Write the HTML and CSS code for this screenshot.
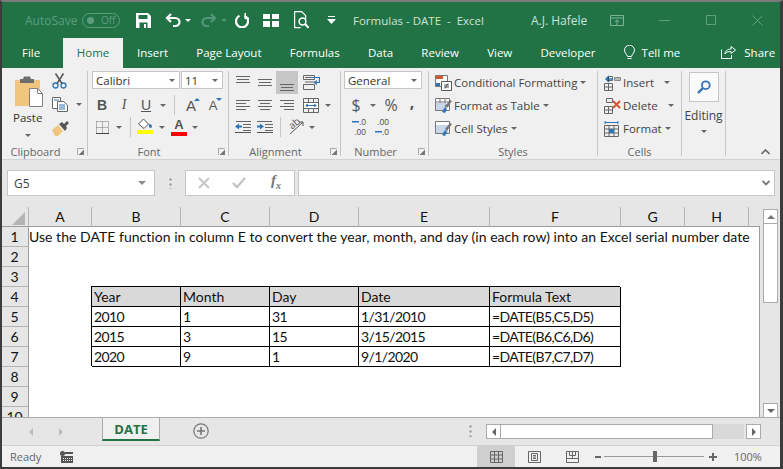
FILE: index.html
```html
<!DOCTYPE html>
<html lang="en">
  <head>
    <meta charset="UTF-8" />
    <title>Formulas - DATE - Excel</title>
    <link rel="stylesheet" href="styles.css">
  </head>
  <body>
    <div class="window">
      <!-- Title bar -->
      <div class="titlebar">
        <span class="autosave">AutoSave</span>
        <span class="toggle"><i></i>Off</span>
        <svg class="qa qa-save" width="15" height="15" viewBox="0 0 15 15"><path fill="#fff" d="M0 0h12l3 3v12H0z"/><path fill="#217346" d="M2.5 2h9v4h-9zM3.5 9.5h8V15h-8z"/><path fill="#fff" d="M8 11h2v4H8z"/></svg>
        <svg class="qa qa-undo" width="16" height="14" viewBox="0 0 16 14"><path fill="none" stroke="#fff" stroke-width="2.2" d="M6 1L2 5l4 4M2 5h8c6 0 6 8 0 8H8"/></svg>
        <i class="tri qa-tri1"></i>
        <svg class="qa qa-redo" width="16" height="14" viewBox="0 0 16 14"><path fill="none" stroke="#52977a" stroke-width="2.2" d="M10 1l4 4-4 4M14 5H6c-6 0-6 8 0 8h2"/></svg>
        <i class="tri dim qa-tri2"></i>
        <svg class="qa qa-repeat" width="14" height="15" viewBox="0 0 14 15"><path fill="none" stroke="#fff" stroke-width="2.2" d="M4.5 2.8a6 6 0 1 0 5 0"/><path fill="#fff" d="M9.5 0v6H14V4.5h-3V0z"/></svg>
        <svg class="qa qa-grid" width="16" height="13" viewBox="0 0 16 13"><path fill="#fff" d="M0 0h7v5H0zM9 0h7v5H9zM0 7h7v6H0zM9 7h7v6H9z"/></svg>
        <svg class="qa qa-preview" width="15" height="18" viewBox="0 0 15 18"><path fill="none" stroke="#fff" stroke-width="1.2" d="M.6.6h7l4 4V8M.6.6v16h6"/><circle cx="8.5" cy="10.5" r="3.4" fill="none" stroke="#fff" stroke-width="1.5"/><path stroke="#fff" stroke-width="2" d="M11 13l3.5 3.8"/></svg>
        <svg class="qa qa-custom" width="9" height="8" viewBox="0 0 9 8"><path fill="#fff" d="M1 0h7v1H1zM0 3h9L4.5 8z"/></svg>
        <span class="doc-title">Formulas - DATE &nbsp;-&nbsp; Excel</span>
        <span class="user">A.J. Hafele</span>
        <svg class="win win-ribbon" width="14" height="11" viewBox="0 0 14 11"><path fill="none" stroke="#7fb398" d="M.5.5h13v10H.5zM.5 3h13M7 10V5M5 7l2-2 2 2"/></svg>
        <svg class="win win-min" width="11" height="1" viewBox="0 0 11 1"><path fill="#5f9f80" d="M0 0h11v1H0z"/></svg>
        <svg class="win win-max" width="10" height="10" viewBox="0 0 10 10"><path fill="none" stroke="#5f9f80" d="M.5.5h9v9h-9z"/></svg>
        <svg class="win win-close" width="11" height="11" viewBox="0 0 11 11"><path stroke="#5f9f80" d="M.5.5l10 10M10.5.5l-10 10"/></svg>
      </div>

      <!-- Ribbon tabs -->
      <div class="tabs">
        <span class="tab tab-file">File</span>
        <span class="tab active">Home</span>
        <span class="tab">Insert</span>
        <span class="tab">Page Layout</span>
        <span class="tab">Formulas</span>
        <span class="tab">Data</span>
        <span class="tab">Review</span>
        <span class="tab">View</span>
        <span class="tab">Developer</span>
        <svg class="bulb" width="11" height="16" viewBox="0 0 11 16"><path fill="none" stroke="#fff" d="M3.5 11.5C3 9 .5 8 .5 5.2a5 5 0 0 1 10 0c0 2.8-2.5 3.8-3 6.300zM3.5 13.5h4"/></svg>
        <span class="tell">Tell me</span>
        <svg class="share-icon" width="15" height="14" viewBox="0 0 15 14"><path fill="none" stroke="#fff" d="M.5 4.5v9h10V10M4 9c0-3 3-5 6-5V1.5L14.5 5 10 8.5V6.5C7.5 6.5 5.5 7 4 9z"/></svg>
        <span class="share">Share</span>
      </div>

      <!-- Ribbon -->
      <div class="ribbon">
        <div class="group g-clipboard">
          <div class="group-body clip-body">
            <div class="paste">
              <svg width="30" height="32" viewBox="0 0 30 32"><path fill="#f0c67e" d="M1 4h25v26H1z"/><path fill="#6d6d6d" d="M6 3h3l1-2.5h6l1 2.5h3v4H6z"/><path fill="#fff" stroke="#808080" d="M15.5 12.5h8l5 5v13h-13z"/><path fill="none" stroke="#808080" d="M23.5 12.5v5h5"/></svg>
              <span class="paste-label">Paste</span>
              <i class="tri"></i>
            </div>
            <div class="clip-tools">
              <svg class="clip-cut" width="15" height="16" viewBox="0 0 15 16"><circle cx="3.5" cy="12.5" r="2.5" fill="none" stroke="#2f75b5" stroke-width="1.3"/><circle cx="11.5" cy="12.5" r="2.5" fill="none" stroke="#2f75b5" stroke-width="1.3"/><path stroke="#555" stroke-width="1.5" d="M5 10.5L11.5.5M10 10.5L3.5.5"/></svg>
              <div class="clip-copy">
                <svg width="16" height="15" viewBox="0 0 16 15"><path fill="#fff" stroke="#666" d="M.5.5h8v11h-8z"/><path fill="#fff" stroke="#666" d="M5.5 4.5h6l4 3.5v6.5h-10z"/><path stroke="#2f75b5" d="M2 3h5M7 8h6M7 10h6M7 12h6"/></svg>
                <i class="tri"></i>
              </div>
              <svg class="clip-brush" width="17" height="15" viewBox="0 0 17 15"><path fill="#f0c67e" d="M0 9l6-5 5 6-5 5H3z"/><path fill="#555" d="M7 3l3-2 2 2 3-3 2 2-3 3 1 2-2 3z"/></svg>
            </div>
          </div>
          <div class="group-label has-launch">Clipboard<i class="launch"></i></div>
        </div>

        <div class="group g-font">
          <div class="group-body">
            <div class="row-top">
              <span class="combo combo-font">Calibri<i class="tri"></i></span>
              <span class="combo combo-size">11<i class="tri"></i></span>
            </div>
            <div class="tools">
              <span class="tb"><b class="glyph-b">B</b></span>
              <span class="tb"><em class="glyph-i">I</em></span>
              <span class="tb"><u class="glyph-u">U</u></span>
              <span class="cb"><i class="tri"></i></span>
              <span class="sep sep-font1"></span>
              <span class="tb"><span class="glyph-grow">A</span><i class="mini-up"></i></span>
              <span class="tb"><span class="glyph-shrink">A</span><i class="mini-down"></i></span>
            </div>
            <div class="tools">
              <span class="tb"><svg width="13" height="13" viewBox="0 0 13 13"><path fill="none" stroke="#777" stroke-dasharray="1 1" d="M.5.5h12v12M.5.5v12M6.5.5v12M.5 6.5h12"/><path stroke="#444" d="M0 12.5h13"/></svg></span>
              <span class="cb"><i class="tri"></i></span>
              <span class="sep sep-font2"></span>
              <span class="tb tb-color">
                <svg width="16" height="12" viewBox="0 0 16 12"><path fill="#fff" stroke="#555" d="M1.5 6l5-5 5 5-4.5 4.5z"/><path fill="#2f75b5" d="M12 6c2 0 3 1 3 3 0 1-3 1-3 0z"/></svg>
                <i class="swatch yellow"></i>
              </span>
              <span class="cb"><i class="tri"></i></span>
              <span class="tb tb-color">
                <span class="glyph-color">A</span>
                <i class="swatch red"></i>
              </span>
              <span class="cb cb-narrow"><i class="tri"></i></span>
            </div>
          </div>
          <div class="group-label has-launch">Font<i class="launch"></i></div>
        </div>

        <div class="group g-align">
          <div class="group-body">
            <div class="tools tools-first">
              <span class="tb"><svg class="al-top" width="14" height="7" viewBox="0 0 14 7"><path stroke="#666" d="M0 .5h14M1 3.5h12M0 6.5h14"/></svg></span>
              <span class="tb"><svg width="14" height="7" viewBox="0 0 14 7"><path stroke="#666" d="M0 .5h14M1 3.5h12M0 6.5h14"/></svg></span>
              <span class="tb tb-on"><svg class="al-bottom" width="14" height="7" viewBox="0 0 14 7"><path stroke="#666" d="M0 .5h14M1 3.5h12M0 6.5h14"/></svg></span>
              <span class="tb tb-wrap"><svg width="17" height="15" viewBox="0 0 17 15"><path fill="none" stroke="#666" d="M.5.5h11v4H.5zM.5 9.5h11v5H.5zM2 2.5h8M2 7h10"/><path fill="none" stroke="#2f75b5" stroke-width="1.2" d="M8 2.5h8.5v5H12M14 5.5l-2.5 2 2.5 2"/></svg></span>
            </div>
            <div class="tools">
              <span class="tb"><svg width="14" height="10" viewBox="0 0 14 10"><path stroke="#666" d="M0 .5h14M0 3.5h10M0 6.5h14M0 9.5h10"/></svg></span>
              <span class="tb"><svg width="14" height="10" viewBox="0 0 14 10"><path stroke="#666" d="M0 .5h14M2 3.5h10M0 6.5h14M2 9.5h10"/></svg></span>
              <span class="tb"><svg width="14" height="10" viewBox="0 0 14 10"><path stroke="#666" d="M0 .5h14M4 3.5h10M0 6.5h14M4 9.5h10"/></svg></span>
              <span class="tb tb-wrap"><svg width="16" height="15" viewBox="0 0 16 15"><path fill="none" stroke="#666" d="M.5.5h15v14H.5zM.5 4.5h15M.5 10.5h15M5.5.5v4M10.5.5v4M5.5 10.5v4M10.5 10.5v4"/><path fill="#fff" d="M1 5h14v5H1z"/><path stroke="#2f75b5" d="M3 7.5h10M4.5 6L3 7.5 4.5 9M11.5 6L13 7.5 11.5 9"/></svg></span>
              <span class="cb"><i class="tri"></i></span>
            </div>
            <div class="tools">
              <span class="tb"><svg width="16" height="12" viewBox="0 0 16 12"><path stroke="#666" d="M1 .5h15M8 3.5h8M8 6.5h8M8 9.5h8"/><path stroke="#555" d="M0 11.5h16"/><path fill="#2f75b5" d="M0 5.5L4 2.5v2h3v2H4v2z"/></svg></span>
              <span class="tb"><svg width="16" height="12" viewBox="0 0 16 12"><path stroke="#666" d="M0 .5h15M8 3.5h8M8 6.5h8M8 9.5h8"/><path stroke="#555" d="M0 11.5h16"/><path fill="#2f75b5" d="M7 5.5L3 2.5v2H0v2h3v2z"/></svg></span>
              <span class="sep sep-align"></span>
              <span class="tb tb-orient"><span class="orient">ab</span><svg width="18" height="16" viewBox="0 0 18 16"><path stroke="#555" fill="none" d="M3 15L16 3M16 3h-4M16 3v4"/></svg></span>
              <span class="cb cb-orient"><i class="tri"></i></span>
            </div>
          </div>
          <div class="group-label has-launch">Alignment<i class="launch"></i></div>
        </div>

        <div class="group g-number">
          <div class="group-body">
            <div class="row-top">
              <span class="combo combo-num">General<i class="tri"></i></span>
            </div>
            <div class="tools num-tools">
              <span class="tb glyph-sym">$</span>
              <span class="cb"><i class="tri"></i></span>
              <span class="tb glyph-sym glyph-pct">%</span>
              <span class="tb glyph-sym glyph-comma">,</span>
            </div>
            <div class="tools num-tools">
              <span class="tb dec"><span><i class="arrow-l"></i>.0</span><span>.00</span></span>
              <span class="tb dec"><span>.00</span><span><i class="arrow-r"></i>.0</span></span>
            </div>
          </div>
          <div class="group-label has-launch">Number<i class="launch"></i></div>
        </div>

        <div class="group g-styles">
          <div class="group-body">
            <div class="cmd">
              <svg width="17" height="16" viewBox="0 0 17 16"><path fill="#fff" stroke="#777" d="M.5.5h12v11H.5z"/><path fill="#d9552b" d="M1 1h7v3H1z"/><path fill="#2f75b5" d="M1 8h4v3H1z"/><path fill="#fff" stroke="#555" d="M6.5 6.5h10v9h-10z"/><path stroke="#555" d="M9 10h5M9 12h5M13 8.5l-3 5"/></svg>
              <span>Conditional Formatting</span><i class="tri"></i>
            </div>
            <div class="cmd">
              <svg width="17" height="16" viewBox="0 0 17 16"><path fill="#fff" stroke="#777" d="M.5.5h14v12H.5zM.5 4h14M.5 8h14M5 .5v12M10 .5v12"/><path fill="#c7d6e8" d="M1 5h9v7H1z"/><path fill="#2f75b5" d="M7 14l3-5 2 2-2 4z"/><path fill="#777" d="M10 8l5-6 2 1-5 7z"/></svg>
              <span>Format as Table</span><i class="tri"></i>
            </div>
            <div class="cmd">
              <svg width="17" height="16" viewBox="0 0 17 16"><path fill="#fff" stroke="#777" d="M.5.5h14v12H.5z"/><path fill="#c7d6e8" d="M1 4h12v8H1z"/><path fill="#2f75b5" d="M7 14l3-5 2 2-2 4z"/><path fill="#777" d="M10 8l5-6 2 1-5 7z"/></svg>
              <span>Cell Styles</span><i class="tri"></i>
            </div>
          </div>
          <div class="group-label">Styles</div>
        </div>

        <div class="group g-cells">
          <div class="group-body">
            <div class="cmd">
              <svg width="17" height="16" viewBox="0 0 17 16"><path fill="none" stroke="#666" d="M.5 8.5h8v7h-8zM4.5 8.5v7M.5 12h8M4.5 1.5h4v4h-4"/><path fill="#bbb" stroke="#888" d="M10.5 2.5h6v3h-6z"/><path stroke="#2f75b5" stroke-width="1.5" d="M9 4H2M5 1L2 4l3 3"/></svg>
              <span>Insert</span><i class="tri tri-far"></i>
            </div>
            <div class="cmd">
              <svg width="17" height="16" viewBox="0 0 17 16"><path fill="none" stroke="#666" d="M.5 8.5h8v7h-8zM4.5 8.5v7M.5 12h8M2.5.5h6v4h-6z"/><path stroke="#d9552b" stroke-width="2" d="M9 3l7 7M16 3l-7 7"/></svg>
              <span>Delete</span><i class="tri tri-far"></i>
            </div>
            <div class="cmd">
              <svg width="17" height="16" viewBox="0 0 17 16"><path fill="none" stroke="#666" d="M.5 4.5h14v11H.5zM.5 8h14M.5 12h14M5 4.5v11M10 4.5v11"/><path fill="#2f75b5" d="M5 8h5v4H5z"/><path stroke="#2f75b5" d="M1 1.5h13M1 0v3M14 0v3"/></svg>
              <span>Format</span><i class="tri"></i>
            </div>
          </div>
          <div class="group-label">Cells</div>
        </div>

        <div class="group g-editing">
          <div class="edit-btn">
            <svg width="14" height="14" viewBox="0 0 14 14"><circle cx="8.8" cy="5.2" r="3.9" fill="none" stroke="#2f75b5" stroke-width="1.8"/><path stroke="#2f75b5" stroke-width="2.4" d="M6 8L1 13"/></svg>
          </div>
          <span class="edit-label">Editing</span>
          <i class="tri"></i>
        </div>

        <div class="collapse">
          <svg width="9" height="6" viewBox="0 0 9 6"><path fill="none" stroke="#666" stroke-width="1.6" d="M.5 5l4-4 4 4"/></svg>
        </div>
      </div>

      <!-- Formula bar -->
      <div class="formula-bar">
        <div class="name-box">G5<i class="tri tri-big"></i></div>
        <div class="fb-dots"></div>
        <div class="fx-box">
          <svg width="12" height="12" viewBox="0 0 12 12"><path stroke="#c4c4c4" stroke-width="1.8" d="M1 1l10 10M11 1L1 11"/></svg>
          <svg width="14" height="12" viewBox="0 0 14 12"><path fill="none" stroke="#c4c4c4" stroke-width="2.4" d="M1 6l4 4 8-9"/></svg>
          <em class="fx">f<sub>x</sub></em>
        </div>
        <div class="formula-input">
          <svg width="8" height="6" viewBox="0 0 8 6"><path fill="none" stroke="#777" stroke-width="1.8" d="M.5 1l3.5 3.5L7.5 1"/></svg>
        </div>
      </div>

      <!-- Sheet -->
      <div class="sheet-area">
        <div class="sheet">
          <div class="head-row">
            <div class="corner"><i></i></div>
            <div class="col-head">A</div>
            <div class="col-head">B</div>
            <div class="col-head">C</div>
            <div class="col-head">D</div>
            <div class="col-head">E</div>
            <div class="col-head">F</div>
            <div class="col-head">G</div>
            <div class="col-head">H</div>
          </div>
          <div class="rows">
            <div class="sheet-row">
              <div class="row-head">1</div>
              <div class="cell cell-long">Use the DATE function in column E to convert the year, month, and day (in each row) into an Excel serial number date</div>
            </div>
            <div class="sheet-row"><div class="row-head">2</div></div>
            <div class="sheet-row"><div class="row-head">3</div></div>
            <div class="sheet-row">
              <div class="row-head">4</div><div></div>
              <div class="cell boxed shaded">Year</div>
              <div class="cell boxed shaded">Month</div>
              <div class="cell boxed shaded">Day</div>
              <div class="cell boxed shaded">Date</div>
              <div class="cell boxed shaded">Formula Text</div>
            </div>
            <div class="sheet-row">
              <div class="row-head">5</div><div></div>
              <div class="cell boxed num">2010</div>
              <div class="cell boxed num">1</div>
              <div class="cell boxed num">31</div>
              <div class="cell boxed num">1/31/2010</div>
              <div class="cell boxed num">=DATE(B5,C5,D5)</div>
            </div>
            <div class="sheet-row">
              <div class="row-head">6</div><div></div>
              <div class="cell boxed num">2015</div>
              <div class="cell boxed num">3</div>
              <div class="cell boxed num">15</div>
              <div class="cell boxed num">3/15/2015</div>
              <div class="cell boxed num">=DATE(B6,C6,D6)</div>
            </div>
            <div class="sheet-row">
              <div class="row-head">7</div><div></div>
              <div class="cell boxed num">2020</div>
              <div class="cell boxed num">9</div>
              <div class="cell boxed num">1</div>
              <div class="cell boxed num">9/1/2020</div>
              <div class="cell boxed num">=DATE(B7,C7,D7)</div>
            </div>
            <div class="sheet-row"><div class="row-head">8</div></div>
            <div class="sheet-row"><div class="row-head">9</div></div>
            <div class="sheet-row"><div class="row-head">10</div></div>
          </div>
        </div>
        <div class="vscroll">
          <div class="sb-btn"><i class="tri tri-up"></i></div>
          <div class="vthumb"></div>
          <div class="sb-btn sb-down"><i class="tri"></i></div>
        </div>
      </div>

      <!-- Sheet tabs -->
      <div class="sheet-tabs">
        <i class="nav-prev"></i>
        <i class="nav-next"></i>
        <div class="sheet-tab">DATE</div>
        <svg class="add-sheet" width="16" height="16" viewBox="0 0 16 16"><circle cx="8" cy="8" r="7.2" fill="none" stroke="#777" stroke-width="1.2"/><path stroke="#777" stroke-width="1.6" d="M8 4v8M4 8h8"/></svg>
        <div class="tab-dots"></div>
        <div class="hscroll">
          <div class="sb-btn sb-h"><i class="nav-dark-l"></i></div>
          <div class="hthumb"></div>
          <div class="htrack"></div>
          <div class="sb-btn sb-h"><i class="nav-dark-r"></i></div>
        </div>
      </div>

      <!-- Status bar -->
      <div class="status">
        <span class="ready">Ready</span>
        <svg class="macro" width="13" height="12" viewBox="0 0 13 12"><circle cx="2.5" cy="2.5" r="2.5" fill="#555"/><path fill="#555" d="M5 1h8v2H5zM1 5h12v7H1z"/><path stroke="#f0f0f0" stroke-dasharray="1 1" d="M3 7.5h9M3 9.5h9"/></svg>
        <div class="view view-on"><svg width="13" height="12" viewBox="0 0 13 12"><path fill="none" stroke="#666" d="M.5.5h12v11H.5zM.5 4h12M.5 8h12M4.5.5v11M8.5.5v11"/></svg></div>
        <div class="view"><svg width="13" height="12" viewBox="0 0 13 12"><path fill="none" stroke="#666" d="M.5.5h12v11H.5zM3.5 2.5h6v7h-6zM5 4.5h3M5 6h3M5 7.5h3"/></svg></div>
        <div class="view"><svg width="13" height="12" viewBox="0 0 13 12"><path fill="none" stroke="#666" d="M.5.5h12v11H.5zM.5 7.5h12M6.5.5v7M3.5.5v4h6v-4"/></svg></div>
        <div class="zoom">
          <i class="z-minus"></i>
          <div class="z-track"><i></i></div>
          <i class="z-plus"></i>
        </div>
        <span class="zoom-pct">100%</span>
      </div>
    </div>
  </body>
</html>
```

FILE: styles.css
```css
* {
  box-sizing: border-box;
}

html,
body {
  margin: 0;
  height: 100%;
  overflow: hidden;
}

body {
  font-family: "Open Sans", "Noto Sans", sans-serif;
  font-size: 11.5px;
  color: #444;
}

i {
  font-style: normal;
}

.window {
  width: 783px;
  height: 469px;
  display: flex;
  flex-direction: column;
  background: #e6e6e6;
  border-style: solid;
  border-color: #7a7a7a #3c3c3c #3c3c3c #3c3c3c;
  border-width: 2px 3px 2px 2px;
}

/* generic little down arrow */
.tri {
  display: inline-block;
  width: 0;
  height: 0;
  border-style: solid;
  border-width: 3px 3px 0 3px;
  border-color: #666 transparent transparent transparent;
}

/* Title bar */
.titlebar {
  height: 36px;
  flex: none;
  background: #217346;
  display: flex;
  align-items: center;
  color: #d5e6dc;
}

.autosave {
  margin-left: 23px;
  width: 51px;
  color: #5c9d7e;
  font-size: 12px;
}

.toggle {
  margin-left: 6px;
  width: 38px;
  height: 15px;
  border: 1px solid #5c9d7e;
  border-radius: 8px;
  color: #5c9d7e;
  font-size: 10px;
  line-height: 13px;
  display: flex;
  align-items: center;
  padding-left: 4px;
  gap: 7px;
}

.toggle i {
  width: 7px;
  height: 7px;
  border-radius: 50%;
  background: #5c9d7e;
}

.qa {
  flex: none;
}

.qa-save { margin-left: 16px; }
.qa-undo { margin-left: 14px; }
.qa-tri1 { margin-left: 4px; border-top-color: #fff; }
.qa-redo { margin-left: 10px; }
.qa-tri2 { margin-left: 4px; }
.tri.dim { border-top-color: #52977a; }
.qa-repeat { margin-left: 8px; }
.qa-grid { margin-left: 14px; }
.qa-preview { margin-left: 15px; }
.qa-custom { margin-left: 18px; }

.doc-title {
  margin-left: 17px;
  width: 178px;
  white-space: nowrap;
  color: #cfe2d7;
}

.user {
  width: 79px;
  font-size: 12px;
  color: #cfe2d7;
}

.win {
  flex: none;
}

.win-min { margin-left: 35px; }
.win-max { margin-left: 36px; }
.win-close { margin-left: 36px; }

/* Ribbon tabs */
.tabs {
  height: 30px;
  flex: none;
  background: #217346;
  display: flex;
  align-items: stretch;
  color: #fff;
}

.tabs > * {
  flex: none;
}

.tab {
  padding: 0 14.1px;
  line-height: 29px;
  white-space: nowrap;
}

.tab-file {
  width: 61px;
  padding: 0 0 0 20px;
}

.tab.active {
  width: 60px;
  padding: 0;
  text-align: center;
  background: #f0f0f0;
  color: #217346;
}

.bulb {
  margin: 7px 0 0 14px;
}

.tell {
  margin-left: 7px;
  line-height: 29px;
  white-space: nowrap;
}

.share-icon {
  margin: 7px 0 0 41px;
}

.share {
  margin-left: 8px;
  line-height: 29px;
}

/* Ribbon */
.ribbon {
  height: 92px;
  flex: none;
  background: #f0f0f0;
  border-bottom: 1px solid #d2d2d2;
  display: flex;
  padding-top: 3px;
}

.group {
  height: 85px;
  display: flex;
  flex-direction: column;
  border-right: 1px solid #c6c6c6;
  flex: none;
}

.group-body {
  flex: 1;
}

.group-label {
  height: 15px;
  line-height: 15px;
  text-align: center;
  color: #666;
  font-size: 11px;
  position: relative;
  top: 3px;
  white-space: nowrap;
}

.group-label.has-launch {
  padding-right: 18px;
}

.launch {
  position: absolute;
  right: 3px;
  top: 4px;
  width: 7px;
  height: 7px;
  border-left: 1px solid #aaa;
  border-top: 1px solid #aaa;
  background: linear-gradient(135deg, transparent 55%, #777 55%);
}

.g-clipboard { width: 86px; }
.g-font { width: 141px; padding-left: 3px; }
.g-align { width: 112px; padding-left: 3px; }
.g-number { width: 88px; }
.g-styles { width: 169px; padding-left: 6px; }
.g-cells { width: 84px; padding-left: 6px; }

.g-font .group-label,
.g-align .group-label {
  margin-left: -3px;
}

.g-styles .group-label,
.g-cells .group-label {
  margin-left: -6px;
}

.clip-body {
  display: flex;
}

.paste {
  width: 50px;
  padding-left: 12px;
  display: flex;
  flex-direction: column;
  align-items: flex-start;
}

.paste svg {
  margin-top: 5px;
}

.paste-label {
  margin: 1px 0 0 -1px;
  color: #333;
  line-height: 17px;
}

.paste .tri {
  margin: 8px 0 0 11px;
}

.clip-tools {
  display: flex;
  flex-direction: column;
  padding-top: 2px;
  align-items: flex-start;
}

.clip-copy {
  display: flex;
  align-items: center;
  gap: 8px;
  margin-top: 8px;
}

.clip-brush {
  margin-top: 9px;
}

.row-top {
  display: flex;
  gap: 1px;
  height: 23px;
  align-items: flex-start;
}

.combo {
  height: 18px;
  background: #fff;
  border: 1px solid #c6c6c6;
  display: flex;
  align-items: center;
  justify-content: space-between;
  padding: 0 4px 0 3px;
  color: #333;
}

.combo-font { width: 88px; margin-left: 1px; }
.combo-size { width: 42px; }
.combo-num { width: 78px; margin-left: 3px; padding-left: 3px; }

.tools {
  display: flex;
  height: 22px;
  align-items: center;
}

.tools-first {
  height: 23px;
}

.tb {
  width: 22px;
  height: 22px;
  flex: none;
  display: flex;
  align-items: center;
  justify-content: center;
  position: relative;
}

.tb-on {
  height: 23px;
  background: #c6c6c6;
}

.al-top {
  margin-top: -7px;
}

.al-bottom {
  margin-top: 9px;
}

.tb-wrap {
  margin-left: 2px;
}

.cb {
  width: 12px;
  height: 22px;
  flex: none;
  display: flex;
  align-items: center;
  justify-content: center;
}

.cb-narrow,
.cb-orient {
  width: 10px;
}

.sep {
  width: 1px;
  height: 20px;
  background: #c6c6c6;
  flex: none;
}

.sep-font1 { margin: 0 5px 0 5px; }
.sep-font2 { margin: 0 3px 0 5px; }
.sep-align { margin: 0 4px 0 4px; }

.glyph-b,
.glyph-i,
.glyph-u {
  font-size: 14px;
  color: #555;
  font-family: "Liberation Sans", sans-serif;
}

.glyph-i {
  font-family: "Liberation Serif", serif;
}

.glyph-grow,
.glyph-shrink,
.glyph-color {
  font-family: "Liberation Sans", sans-serif;
  color: #555;
  font-size: 15px;
}

.glyph-shrink {
  font-size: 13px;
}

.glyph-color {
  line-height: 14px;
  font-weight: bold;
  font-size: 13px;
}

.mini-up,
.mini-down {
  position: absolute;
  top: 4px;
  right: 2px;
  width: 0;
  height: 0;
  border-style: solid;
  border-color: #2f75b5 transparent;
}

.mini-up { border-width: 0 3px 3px 3px; }
.mini-down { border-width: 3px 3px 0 3px; }

.tb-color {
  flex-direction: column;
  justify-content: flex-start;
  padding-top: 2px;
}

.swatch {
  width: 16px;
  height: 4px;
}

.yellow { background: #ffff00; }
.red { background: #ff0000; }

.tb-orient svg {
  flex: none;
}

.orient {
  position: absolute;
  left: 3px;
  top: 1px;
  font-size: 10px;
  line-height: 12px;
  color: #555;
  transform: rotate(-40deg);
}

.num-tools {
  padding-left: 4px;
}

.glyph-sym {
  font-size: 16px;
  color: #555;
}

.glyph-pct {
  margin-left: 1px;
}

.glyph-comma {
  font-weight: bold;
  margin-top: -7px;
  margin-left: -1px;
}

.dec {
  flex-direction: column;
  font-family: "Liberation Sans", sans-serif;
  font-size: 8.5px;
  line-height: 10px;
  color: #555;
  align-items: flex-end;
  width: 21px;
  margin-right: 2px;
  white-space: nowrap;
}

.dec span {
  display: block;
  height: 10px;
}

.arrow-l,
.arrow-r {
  display: inline-block;
  width: 7px;
  height: 5px;
  vertical-align: 1px;
  background: linear-gradient(#2f75b5, #2f75b5) center / 100% 1.5px no-repeat;
}

.cmd {
  height: 23px;
  display: flex;
  align-items: center;
  color: #444;
  white-space: nowrap;
}

.cmd svg {
  flex: none;
  margin-right: 2px;
}

.cmd .tri {
  margin-left: 3px;
}

.cmd .tri-far {
  margin-left: 10px;
}

.g-editing {
  width: 44px;
  align-items: center;
  padding-top: 1px;
}

.edit-btn {
  width: 30px;
  height: 30px;
  background: #fafafa;
  border: 1px solid #c6c6c6;
  display: flex;
  align-items: center;
  justify-content: center;
}

.edit-label {
  margin-top: 5px;
  font-size: 12px;
  line-height: 17px;
}

.g-editing .tri {
  margin-top: 6px;
}

.collapse {
  margin-left: 35px;
  padding-top: 72px;
}

/* Formula bar */
.formula-bar {
  height: 47px;
  flex: none;
  display: flex;
  align-items: flex-start;
  padding: 10px 5px 0 5px;
}

.name-box {
  width: 148px;
  height: 26px;
  background: #fff;
  border: 1px solid #c6c6c6;
  display: flex;
  align-items: center;
  justify-content: space-between;
  padding: 0 8px 0 6px;
  color: #444;
  font-size: 12px;
}

.tri-big {
  border-width: 4px 4px 0 4px;
  border-top-color: #8a8a8a;
}

.fb-dots {
  width: 30px;
  height: 12px;
  margin-top: 7px;
  background: radial-gradient(circle, #aaa 1px, transparent 1.5px) center top / 3px 5px repeat-y;
}

.fx-box {
  width: 110px;
  height: 26px;
  background: #fff;
  border: 1px solid #c6c6c6;
  display: flex;
  align-items: center;
  gap: 22px;
  padding-left: 12px;
}

.fx {
  font-family: "Liberation Serif", serif;
  font-size: 15px;
  font-weight: bold;
  color: #777;
  line-height: 12px;
  margin-left: 3px;
}

.fx sub {
  font-size: 10px;
}

.formula-input {
  width: 477px;
  height: 26px;
  margin-left: 3px;
  background: #fff;
  border: 1px solid #c6c6c6;
  display: flex;
  align-items: center;
  justify-content: flex-end;
  padding-right: 4px;
}

/* Sheet */
.sheet-area {
  height: 210px;
  flex: none;
  display: flex;
  font-family: "Lato", "Open Sans", sans-serif;
  font-size: 14px;
  color: #111;
}

.sheet {
  width: 758px;
  flex: none;
  display: flex;
  flex-direction: column;
}

.head-row,
.sheet-row {
  display: grid;
  grid-template-columns: 27px 63px 89px 89px 89px 131px 131px 64px 64px;
}

.head-row {
  height: 20px;
  border-bottom: 1px solid #9c9c9c;
}

.corner {
  border-right: 1px solid #b4b4b4;
  position: relative;
}

.corner i {
  position: absolute;
  right: 3px;
  bottom: 2px;
  width: 0;
  height: 0;
  border-style: solid;
  border-width: 0 0 13px 13px;
  border-color: transparent transparent #b4b4b4 transparent;
}

.col-head {
  border-right: 1px solid #b4b4b4;
  text-align: center;
  line-height: 20px;
}

.rows {
  flex: 1;
  overflow: hidden;
  background: #fff;
  border-right: 1px solid #9c9c9c;
}

.sheet-row {
  height: 20px;
  grid-template-rows: 20px;
}

.row-head {
  background: #e6e6e6;
  border-right: 1px solid #9c9c9c;
  border-bottom: 1px solid #b4b4b4;
  text-align: center;
  line-height: 20px;
  padding-right: 1px;
}

.cell {
  line-height: 20px;
  white-space: nowrap;
}

.cell-long {
  grid-column: 2 / span 8;
  letter-spacing: .03px;
}

.boxed {
  padding-left: 2px;
  border-right: 1px solid #000;
  border-bottom: 1px solid #000;
  box-shadow: -1px -1px 0 #000;
}

.boxed.num {
  letter-spacing: -.6px;
}

.shaded {
  background: #d9d9d9;
}

.vscroll {
  flex: 1;
  padding: 2px 4px 0 3px;
  display: flex;
  flex-direction: column;
}

.sb-btn {
  width: 15px;
  height: 15px;
  background: #fff;
  border: 1px solid #ababab;
  display: flex;
  align-items: center;
  justify-content: center;
  flex: none;
}

.sb-btn .tri {
  border-width: 4px 4px 0 4px;
}

.sb-btn .tri-up {
  border-width: 0 4px 4px 4px;
  border-color: transparent transparent #777 transparent;
}

.vthumb {
  width: 15px;
  height: 79px;
  background: #fff;
  border: 1px solid #ababab;
  border-top: none;
}

.sb-down {
  margin-top: auto;
  margin-bottom: -1px;
}

/* Sheet tabs */
.sheet-tabs {
  height: 28px;
  flex: none;
  border-top: 1px solid #ababab;
  display: flex;
  position: relative;
}

.nav-prev,
.nav-next,
.nav-dark-l,
.nav-dark-r {
  width: 0;
  height: 0;
  border-style: solid;
  border-color: transparent;
}

.nav-prev {
  margin: 10px 0 0 27px;
  border-width: 4px 4px 4px 0;
  border-right-color: #bbb;
}

.nav-next {
  margin: 10px 0 0 26px;
  border-width: 4px 0 4px 4px;
  border-left-color: #bbb;
}

.sheet-tab {
  width: 58px;
  height: 24px;
  margin-left: 39px;
  margin-top: -1px;
  background: #f0f0f0;
  border: 1px solid #ababab;
  border-bottom: 2px solid #217346;
  color: #217346;
  font-weight: bold;
  font-size: 13px;
  text-align: center;
  line-height: 22px;
}

.add-sheet {
  margin: 5px 0 0 33px;
}

.tab-dots {
  width: 3px;
  height: 13px;
  margin: 6px 0 0 260px;
  background: radial-gradient(circle, #aaa 1px, transparent 1.5px) center top / 3px 5px repeat-y;
}

.hscroll {
  margin: 6px 0 0 14px;
  display: flex;
  height: 15px;
}

.sb-h {
  height: 15px;
}

.nav-dark-l {
  border-width: 4px 4px 4px 0;
  border-right-color: #666;
}

.nav-dark-r {
  border-width: 4px 0 4px 4px;
  border-left-color: #666;
}

.hthumb {
  width: 212px;
  background: #fff;
  border: 1px solid #ababab;
  border-left: none;
}

.htrack {
  width: 31px;
  background: #d8d8d8;
  margin-right: 2px;
}

/* Status bar */
.status {
  flex: 1;
  background: #f0f0f0;
  border-top: 1px solid #d2d2d2;
  display: flex;
  align-items: center;
  color: #666;
  font-size: 11px;
}

.ready {
  margin-left: 8px;
  width: 50px;
}

.macro {
  flex: none;
}

.view {
  width: 38px;
  height: 100%;
  flex: none;
  display: flex;
  align-items: center;
  justify-content: center;
}

.view-on {
  margin-left: 404px;
  background: #cfcfcf;
}

.zoom {
  margin-left: 3px;
  display: flex;
  align-items: center;
  gap: 3px;
}

.z-minus {
  width: 6px;
  height: 2px;
  background: #666;
  margin-left: 1px;
}

.z-track {
  width: 100px;
  height: 1px;
  background: #999;
  position: relative;
}

.z-track i {
  position: absolute;
  left: 49px;
  top: -5px;
  width: 4px;
  height: 11px;
  background: #666;
}

.z-plus {
  width: 8px;
  height: 8px;
  margin-left: 2px;
  background:
    linear-gradient(#666, #666) center / 100% 2px no-repeat,
    linear-gradient(#666, #666) center / 2px 100% no-repeat;
}

.zoom-pct {
  margin-left: 17px;
}
```
